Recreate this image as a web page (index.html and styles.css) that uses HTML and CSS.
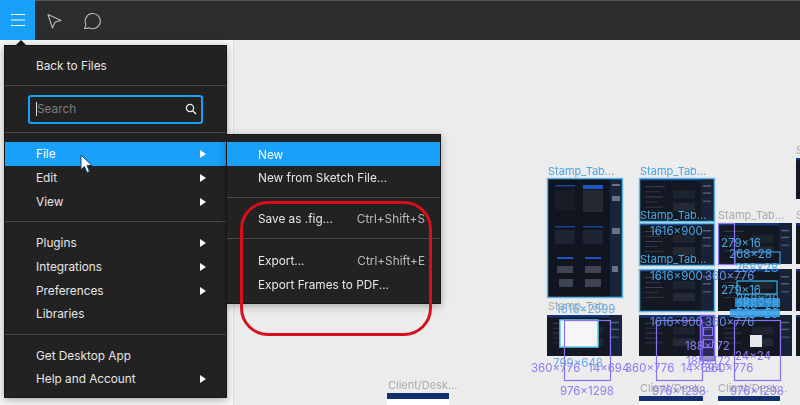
FILE: index.html
```html
<!DOCTYPE html>
<html lang="en">
<head>
<meta charset="utf-8">
<title>Figma menu</title>
<link rel="stylesheet" href="styles.css">
</head>
<body>
<div class="app">
  <header class="toolbar">
    <button class="tool tool-menu" aria-label="Menu">
      <svg width="14" height="12" viewBox="0 0 14 12"><path d="M0 .5h14M0 6h14M0 11.5h14" stroke="#fff" stroke-width="1"/></svg>
    </button>
    <button class="tool tool-move" aria-label="Move">
      <svg width="15" height="16" viewBox="0 0 15 16"><path d="M1 1.5 14 7.5 8.2 9 5.5 15Z" fill="none" stroke="#b9b9b9" stroke-width="1.1" stroke-linejoin="round"/></svg>
    </button>
    <button class="tool tool-comment" aria-label="Comment">
      <svg width="19" height="18" viewBox="0 0 19 18"><path d="M1.5 16.5 3 12.6A7.6 7.6 0 1 1 6 15.7C4.5 16.4 3 16.6 1.5 16.5Z" fill="none" stroke="#b9b9b9" stroke-width="1.1" stroke-linejoin="round"/></svg>
    </button>
  </header>

  <div class="workspace">
    <aside class="sidepanel"></aside>
    <svg class="canvas" viewBox="234 40 566 365" width="566" height="365">
      <defs>
        <symbol id="frame" viewBox="0 0 75 42" preserveAspectRatio="none">
          <rect width="75" height="42" fill="#131823"/>
          <rect width="75" height="2.5" fill="#16357a"/>
          <rect x="62" width="13" height="42" fill="#18233a"/>
          <rect x="6" y="8" width="20" height="1" fill="#3a4352"/>
          <rect x="6" y="13" width="15" height="1" fill="#2f3744"/>
          <rect x="6" y="18" width="18" height="1" fill="#3a4352"/>
          <rect x="6" y="23" width="13" height="1" fill="#2f3744"/>
          <rect x="6" y="28" width="18" height="1" fill="#2f3744"/>
          <rect x="34" y="12" width="22" height="8" fill="#1d2430"/>
          <rect x="34" y="24" width="22" height="8" fill="#232a36"/>
          <rect x="64" y="7" width="8" height="1.5" fill="#555f70"/>
          <rect x="64" y="14" width="8" height="1.5" fill="#555f70"/>
          <rect x="64" y="22" width="8" height="1.5" fill="#465066"/>
        </symbol>
        <symbol id="tall" viewBox="0 0 75 119" preserveAspectRatio="none">
          <rect width="75" height="119" fill="#11151f"/>
          <rect x="63" width="12" height="119" fill="#1a2438"/>
          <rect x="8" y="7" width="20" height="1.5" fill="#1a4496"/>
          <rect x="36" y="7" width="20" height="4" fill="#1c56c0"/>
          <rect x="36" y="12" width="20" height="22" fill="#252a32"/>
          <rect x="8" y="12" width="20" height="20" fill="#171c26"/>
          <rect x="8" y="48" width="20" height="1.5" fill="#1a4496"/>
          <rect x="8" y="52" width="20" height="14" fill="#1d2330"/>
          <rect x="36" y="48" width="20" height="1.5" fill="#1a4496"/>
          <rect x="36" y="52" width="20" height="14" fill="#1d2330"/>
          <rect x="10" y="79" width="16" height="2" fill="#1c56c0"/>
          <rect x="38" y="79" width="16" height="2" fill="#1c56c0"/>
          <rect x="10" y="88" width="16" height="7" fill="#3e4450"/>
          <rect x="12" y="101" width="14" height="8" fill="#3e4450"/>
          <rect x="38" y="88" width="16" height="7" fill="#3e4450"/>
          <rect x="38" y="101" width="16" height="8" fill="#3e4450"/>
          <rect x="65" y="6" width="8" height="2" fill="#6a7484"/>
          <rect x="65" y="18" width="8" height="5" fill="#6a7484"/>
          <rect x="65" y="50" width="8" height="6" fill="#6a7484"/>
          <rect x="65" y="88" width="6" height="6" fill="#6a7484"/>
        </symbol>
      </defs>

      <g class="thumbs">
        <use href="#tall" x="547" y="178" width="75" height="119"/>
        <rect class="sel" x="547.5" y="178.5" width="75" height="119"/>
        <use href="#frame" x="639" y="178" width="75" height="43"/>
        <rect class="sel" x="639.5" y="178.5" width="75" height="43"/>
        <use href="#frame" x="639" y="223" width="75" height="42"/>
        <rect class="sel" x="639.5" y="223.5" width="75" height="42"/>
        <use href="#frame" x="639" y="269" width="75" height="42"/>
        <rect class="sel" x="639.5" y="269.5" width="75" height="42"/>
        <use href="#frame" x="718" y="223" width="74" height="41"/>
        <use href="#frame" x="718" y="269" width="74" height="42"/>
        <use href="#frame" x="796" y="158" width="74" height="41"/>
        <use href="#frame" x="796" y="223" width="74" height="41"/>
        <use href="#frame" x="796" y="269" width="74" height="42"/>
        <use href="#frame" x="796" y="315" width="74" height="41"/>
        <use href="#frame" x="547" y="315" width="75" height="41"/>
        <use href="#frame" x="639" y="315" width="75" height="41"/>
        <use href="#frame" x="718" y="315" width="74" height="41"/>
        <rect x="560" y="320" width="38" height="27" fill="#f4f6f8" stroke="#5cd0ee" stroke-width="1.5"/>
        <rect x="750" y="335" width="12" height="12" fill="#e8e8ec"/>
        <rect x="387" y="393" width="62" height="12" fill="#fff"/>
        <rect x="387" y="393" width="62" height="6" fill="#12306e"/>
        <rect x="639" y="396" width="64" height="9" fill="#fff"/>
        <rect x="639" y="396" width="64" height="5" fill="#12306e"/>
        <rect x="718" y="396" width="62" height="9" fill="#fff"/>
        <rect x="718" y="396" width="62" height="5" fill="#12306e"/>
        <rect class="cyan" x="737" y="281" width="40" height="13"/>
        <rect class="cyan-fill" x="735" y="298" width="45" height="9"/>
        <rect class="cyan-fill" x="730" y="309" width="50" height="8"/>
        <rect class="blueline" x="735" y="252" width="45" height="12"/>
        <rect class="violet" x="718.5" y="223.5" width="16" height="41"/>
      </g>

      <g class="overlays">
        <rect class="violet" x="564.5" y="320.5" width="46" height="60"/>
        <rect class="violet" x="656.5" y="320.5" width="46" height="60"/>
        <rect class="violet" x="734.5" y="320.5" width="46" height="60"/>
        <rect class="violet-bold" x="700.5" y="315.5" width="14" height="45"/>
        <rect class="violet" x="703.5" y="327.5" width="9" height="8"/>
        <rect class="violet" x="703.5" y="339.5" width="9" height="8"/>
      </g>

      <g class="labels">
        <text class="name lbl-blue" x="548" y="175">Stamp_Tab...</text>
        <text class="name lbl-blue" x="640" y="175">Stamp_Tab...</text>
        <text class="name lbl-blue" x="640" y="219">Stamp_Tab...</text>
        <text class="name lbl-blue" x="640" y="263">Stamp_Tab...</text>
        <text class="name lbl-grey" x="718" y="219">Stamp_Tab...</text>
        <text class="name lbl-grey" x="796" y="154">S</text>
        <text class="name lbl-grey" x="796" y="219">S</text>
        <text class="name lbl-grey" x="548" y="310">Stamp_Tab...</text>
        <text class="name lbl-grey" x="388" y="389">Client/Desk...</text>
        <text class="name lbl-grey" x="640" y="392">Client/Desk...</text>
        <text class="name lbl-grey" x="718" y="392">Client/Desk...</text>
        <text class="size lbl-blue" x="650" y="235">1616×900</text>
        <text class="size lbl-blue" x="650" y="280">1616×900</text>
        <text class="size lbl-blue" x="721" y="247">279×16</text>
        <text class="size lbl-blue" x="729" y="258">268×28</text>
        <text class="size lbl-blue" x="721" y="294">279×16</text>
        <text class="size lbl-blue" x="735" y="272">268×28</text>
        <text class="size lbl-blue" x="736" y="303">268×28</text>
        <text class="size lbl-blue" x="736" y="309">268×28</text>
        <text class="size lbl-blue" x="735" y="318">268×28</text>
        <text class="size lbl-sky" x="556" y="313">1616×2599</text>
        <text class="size lbl-sky" x="553" y="367">799×648</text>
        <text class="size lbl-periwinkle" x="650" y="326">1616×900</text>
        <text class="size lbl-periwinkle" x="705" y="280">360×776</text>
        <text class="size lbl-periwinkle" x="705" y="326">360×776</text>
        <text class="size lbl-violet" x="531" y="372">360×776</text>
        <text class="size lbl-violet" x="588" y="372">14×694</text>
        <text class="size lbl-violet" x="625" y="372">360×776</text>
        <text class="size lbl-violet" x="681" y="372">14×694</text>
        <text class="size lbl-violet" x="704" y="372">360×776</text>
        <text class="size lbl-violet" x="685" y="350">188×172</text>
        <text class="size lbl-violet" x="686" y="365">188×172</text>
        <text class="size lbl-violet" x="735" y="360">24×24</text>
        <text class="size lbl-violet" x="560" y="395">976×1298</text>
        <text class="size lbl-violet" x="652" y="395">976×1298</text>
        <text class="size lbl-violet" x="730" y="395">976×1298</text>
      </g>
    </svg>
  </div>

  <nav class="menu menu-main">
    <span class="menu-notch"></span>
    <div class="item item-back">Back to Files</div>
    <hr class="sep sep-a">
    <div class="search">
      <span class="caret"></span>
      <span class="search-text">Search</span>
      <svg width="12" height="12" viewBox="0 0 12 12"><circle cx="5" cy="5" r="3.6" fill="none" stroke="#eee" stroke-width="1.2"/><path d="M7.7 7.7 11 11" stroke="#eee" stroke-width="1.4"/></svg>
    </div>
    <hr class="sep sep-b">
    <div class="item item-active">File<span class="arrow"></span></div>
    <div class="item">Edit<span class="arrow"></span></div>
    <div class="item">View<span class="arrow"></span></div>
    <hr class="sep">
    <div class="item">Plugins<span class="arrow"></span></div>
    <div class="item">Integrations<span class="arrow"></span></div>
    <div class="item">Preferences<span class="arrow"></span></div>
    <div class="item">Libraries</div>
    <hr class="sep">
    <div class="item">Get Desktop App</div>
    <div class="item">Help and Account<span class="arrow"></span></div>
  </nav>

  <nav class="menu menu-sub">
    <div class="item item-active">New</div>
    <div class="item">New from Sketch File...</div>
    <hr class="sep sep-c">
    <div class="item">Save as .fig...<span class="shortcut">Ctrl+Shift+S</span></div>
    <hr class="sep sep-d">
    <div class="item">Export...<span class="shortcut">Ctrl+Shift+E</span></div>
    <div class="item">Export Frames to PDF...</div>
  </nav>

  <svg class="cursor" width="14" height="20" viewBox="0 0 14 20"><path d="M1 1V15.5L4.5 12.5 7 18.5 9.5 17.4 7 11.5H12Z" fill="#fff" stroke="#1c3f6e" stroke-width="1"/></svg>
  <div class="annotation"></div>
</div>
</body>
</html>
```

FILE: styles.css
```css
* { box-sizing: border-box; }
html, body { margin: 0; padding: 0; }
body { font-family: Inter, "Liberation Sans", sans-serif; overflow: hidden; }
.app { position: relative; width: 800px; height: 405px; display: flex; flex-direction: column; overflow: hidden; background: #ececec; }

.toolbar { height: 40px; flex: none; display: flex; background: #2c2d2b; border-top: 1px solid #555; }
.tool { border: 0; padding: 0; background: none; display: flex; align-items: center; justify-content: center; height: 39px; }
.tool-menu { width: 35px; margin-top: -1px; height: 40px; background: #18a0fb; }
.tool-move { width: 36px; padding-left: 2px; }
.tool-comment { width: 36px; margin-left: 3px; }

.workspace { flex: 1; display: flex; min-height: 0; }
.sidepanel { width: 234px; flex: none; background: #f6f6f6; border-right: 1px solid #dedede; }
.canvas { display: block; flex: none; background: #ececec; }

.thumbs { filter: blur(.4px); }
.sel { fill: none; stroke: #5cb8ea; stroke-width: 1.5; }
.violet { fill: none; stroke: #8b72f0; stroke-width: 1.2; }
.violet-bold { fill: #3a2f80; fill-opacity: .45; stroke: #7f66f0; stroke-width: 1.6; }
.cyan { fill: none; stroke: #38b8ea; stroke-width: 1.2; }
.cyan-fill { fill: #2f9ee8; opacity: .85; }
.blueline { fill: none; stroke: #3d8fe0; stroke-width: 1.2; }
.labels { filter: blur(.3px); }
.name { font-family: Inter, "Liberation Sans", sans-serif; font-size: 11px; }
.size { font-family: Inter, "Liberation Sans", sans-serif; font-size: 11.5px; }
.lbl-blue { fill: #4ba6e2; }
.lbl-sky { fill: #6aaee8; }
.lbl-grey { fill: #aaaaaa; }
.lbl-periwinkle { fill: #6a8ee8; }
.lbl-violet { fill: #8f7cf0; }

.menu { position: absolute; background: #222222; color: #e6e6e6; font-size: 11.8px; box-shadow: 0 2px 8px rgba(0,0,0,.3); border: 1px solid #161616; }
.menu-main { left: 4px; top: 45px; width: 223px; height: 353px; padding-top: 8px; }
.menu-sub { left: 226px; top: 134px; width: 215px; height: 170px; padding-top: 7px; }
.menu-notch { position: absolute; left: 10px; top: -6px; border: 6px solid transparent; border-top: 0; border-bottom-color: #161616; }

.item { height: 23.6px; padding: 1px 20px 0 31px; display: flex; align-items: center; justify-content: space-between; white-space: nowrap; }
.item-back { padding-top: 0; }
.menu-sub .item { padding-right: 15px; }
.item-active { background: #18a0fb; color: #fff; height: 24px; }
.arrow { width: 0; height: 0; border-left: 6px solid #fff; border-top: 4px solid transparent; border-bottom: 4px solid transparent; }
.shortcut { color: #bcbcbc; }

.sep { height: 1px; margin: 8px 0 9px; border: 0; background: #4a4a4a; }
.sep-a { margin: 7.4px 0 9px; }
.sep-b { margin: 8px 0 9px; }
.sep-c { margin: 7.5px 0 9px; }
.sep-d { margin: 7.5px 0 10px; }

.search { height: 29px; margin: 0 23px; border: 2px solid #18a0fb; border-radius: 3px; display: flex; align-items: center; padding: 0 4px 0 6px; }
.caret { width: 1px; height: 14px; background: #ddd; flex: none; }
.search-text { color: #7d7d7d; flex: 1; }

.cursor { position: absolute; left: 80px; top: 154px; }
.annotation { position: absolute; left: 240px; top: 201px; width: 192px; height: 135px; border: 3px solid #d9101c; border-radius: 28px; }
```
